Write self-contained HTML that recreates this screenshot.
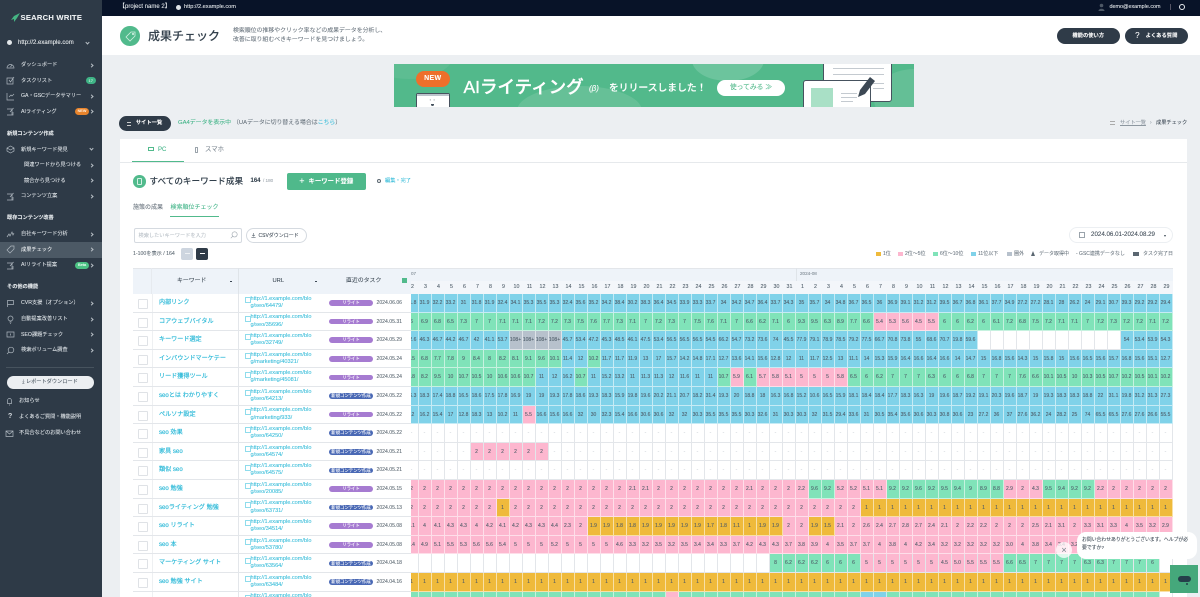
<!DOCTYPE html>
<html lang="ja"><head><meta charset="utf-8"><title>成果チェック</title>
<style>
*{box-sizing:border-box}
html,body{margin:0;padding:0}
body{width:1200px;height:597px;overflow:hidden;position:relative;background:#eceff2;font-family:"Liberation Sans","Noto Sans CJK JP",sans-serif;color:#2f3b48;filter:blur(.25px);-webkit-text-stroke:.07px}
.a{position:absolute;white-space:nowrap}
.t{position:absolute;white-space:nowrap;line-height:10px;margin-top:-5px}
#side{position:absolute;left:0;top:0;width:102px;height:597px;background:#2e3a47;color:#dfe4e8;overflow:hidden}
#side .t{font-size:5.2px;letter-spacing:0}
#side .h{font-weight:700;color:#e8ecef;left:7px}
#side .m{left:21px}
#side .c{left:24px}
#side svg.i{position:absolute;left:6px;width:9px;height:9px;fill:none;stroke:#aeb7bf;stroke-width:.7}
#side .v{position:absolute;left:90px;width:3px;height:3px;border-top:.7px solid #b5bdc4;border-right:.7px solid #b5bdc4;transform:rotate(45deg);margin-top:-1.5px}
.pill{position:absolute;border-radius:9px;background:#2f3b48;color:#fff;font-weight:700;text-align:center;white-space:nowrap}
#grid{position:absolute;left:411px;top:294px;width:762px;height:303px;overflow:hidden}
#in{margin-left:-5.5px;width:780px}
.r{display:flex;height:18.6px}
.r i{flex:0 0 13px;height:18.6px;text-align:center;font:normal 5px/18px "Liberation Sans",sans-serif;color:#4c5a66;border-right:.6px solid rgba(255,255,255,.55);border-bottom:.6px solid rgba(255,255,255,.55);overflow:hidden}
.b i{background:#80d2e9}.g i{background:#80e3b9}.p i{background:#fdb7cf}.y i{background:#efba3b}
.w i{background:#fff;border-right:.6px solid #e3e6ea;border-bottom:.6px solid #e3e6ea;color:#c5cbd1}
i.b{background:#80d2e9!important}i.g{background:#80e3b9!important}i.p{background:#fdb7cf!important}i.y{background:#efba3b!important}i.n{background:#b7c1cc!important}
i.w{background:#fff!important;border-right:.6px solid #e3e6ea!important;border-bottom:.6px solid #e3e6ea!important}
i.g,i.p{color:#4c5a66!important}
#left{position:absolute;left:133px;top:294px;width:278px;height:303px;overflow:hidden;background:#fff}
.k{position:relative;height:18.6px;border-bottom:.6px solid #e3e6ea;background:#fff}
.k:before{content:"";position:absolute;left:5px;top:5px;width:8px;height:8px;border:.6px solid #dfe2e6;border-radius:1px}
.k:after{content:"";position:absolute;left:18.500px;top:0;bottom:0;width:.6px;background:#eef0f2}
.k u{position:absolute;left:104.7px;top:0;bottom:0;width:.6px;background:#e3e6ea}
.k b{position:absolute;left:26px;top:0;line-height:18px;font-size:6.1px;font-weight:400;-webkit-text-stroke:.18px #2fbad8;color:#2fbad8;white-space:nowrap}
.k a{position:absolute;left:117.500px;top:1.800px;font-size:5.600px;line-height:7.300px;color:#35bcd9;width:76px;white-space:pre}
.k a:before{content:"";position:absolute;left:-6px;top:1.500px;width:4px;height:4px;border:.5px solid #8fdcec}
.k s{position:absolute;left:196px;top:6.300px;width:44px;height:5.600px;border-radius:3px;font-size:4.400px;line-height:5.600px;text-align:center;color:#fff;text-decoration:none;background:#a67bd1;white-space:nowrap;overflow:hidden}
.k s.n{background:#4a69b5}
.k em{position:absolute;left:243.500px;top:0;font-style:normal;font-size:5.100px;line-height:18px;color:#5b6771}
.d{position:absolute;top:281px;height:13px;width:13px;text-align:center;font-size:5.300px;line-height:13px;color:#4c5a66}
.lg{position:absolute;top:251.500px;width:4.500px;height:4.500px}
.lt{position:absolute;top:249px;font-size:5px;line-height:10px;color:#6a757f;white-space:nowrap}
</style></head><body>

<div class="a" style="left:102px;top:0;width:1098px;height:16px;background:#081328"></div>
<div class="t" style="left:119px;top:7px;font-size:6px;color:#e8ecef">【project name 2】</div>
<div class="a" style="left:175.500px;top:4.500px;width:5px;height:5px;border-radius:50%;background:#dfe4e8"></div>
<div class="t" style="left:184px;top:7px;font-size:5.600px;color:#e8ecef">http://2.example.com</div>
<svg class="a" style="left:1098px;top:3px" width="7" height="8" viewBox="0 0 7 8"><circle cx="3.500" cy="2.500" r="1.800" fill="#4d5866"/><path d="M.5 8c0-3 6-3 6 0z" fill="#4d5866"/></svg>
<div class="t" style="left:1109.500px;top:7px;font-size:5.400px;color:#e8ecef">demo@example.com</div>
<div class="a" style="left:1170px;top:4px;width:.6px;height:6px;background:#556"></div>
<div class="a" style="left:1179px;top:4px;width:6px;height:6px;border-radius:50%;border:1.800px solid #e8ecef"></div>

<div class="a" style="left:102px;top:16px;width:1098px;height:39px;background:#fff"></div>
<div class="a" style="left:120px;top:26px;width:19.500px;height:19.500px;border-radius:50%;background:#51ba8c"></div>
<svg class="a" style="left:124.500px;top:30.500px" width="11" height="11" viewBox="0 0 11 11" fill="none" stroke="#cfeee0" stroke-width=".8"><path d="M1 6 6 1h4v4L5 10z"/><circle cx="8" cy="3" r=".7"/></svg>
<div class="t" style="left:148px;top:36px;font-size:12px;font-weight:500;color:#33404c;line-height:14px;margin-top:-7px">成果チェック</div>
<div class="t" style="left:233px;top:31px;font-size:5.900px;color:#66717b">検索順位の推移やクリック率などの成果データを分析し、</div>
<div class="t" style="left:233px;top:40px;font-size:5.900px;color:#66717b">改善に取り組むべきキーワードを見つけましょう。</div>
<div class="pill" style="left:1057px;top:28px;width:62.500px;height:16px;font-size:5.300px;line-height:16px">機能の使い方</div>
<div class="pill" style="left:1125px;top:28px;width:62.500px;height:16px;font-size:5.300px;line-height:16px"><span style="font-size:8px;font-weight:400;margin-right:6px;vertical-align:-1px">?</span>よくある質問</div>

<!-- banner -->
<div class="a" style="left:393.500px;top:64px;width:520px;height:43px;background:#52b98b;overflow:hidden">
<div class="a" style="left:298px;top:-25px;width:72px;height:42px;border-radius:50%;background:#6cc49d"></div>
<div class="a" style="left:123px;top:22px;width:125px;height:50px;border-radius:50%;background:#66c097"></div>
<div class="a" style="left:-30px;top:-35px;width:90px;height:50px;border-radius:50%;background:#5dbd92"></div>
<div class="a" style="left:480px;top:5px;width:80px;height:60px;border-radius:50%;background:#64bf96"></div>
<div class="a" style="left:22px;top:28.500px;width:34px;height:20px;background:#fff;border:.8px solid #46525e;border-radius:2px 2px 0 0"></div>
<div class="a" style="left:23px;top:29.500px;width:32px;height:2.500px;background:#bcc4cc"></div>
<div class="t" style="left:35.500px;top:37px;font-size:5px;color:#46525e">･ ･</div>
<div class="a" style="left:37px;top:39.500px;width:3px;height:2.500px;border:.6px solid #46525e;border-radius:0 0 2px 2px"></div>
<div class="a" style="left:22px;top:7px;width:34.500px;height:16px;border-radius:8px;background:#ee6f2b;color:#fff;font-size:7px;font-weight:700;text-align:center;line-height:15.500px;letter-spacing:.3px">NEW</div>
<div class="t" style="left:70px;top:23px;font-size:17.500px;font-weight:500;color:#fff;line-height:20px;margin-top:-10px;-webkit-text-stroke:.35px #fff">AIライティング</div>
<div class="t" style="left:195.500px;top:25px;font-size:8px;font-style:italic;color:#fff">(β)</div>
<div class="t" style="left:215.500px;top:25px;font-size:9.800px;font-weight:500;color:#fff;line-height:12px;margin-top:-6px;-webkit-text-stroke:.15px #fff">をリリースしました！</div>
<div class="a" style="left:323.500px;top:16px;width:68px;height:16.400px;border-radius:8.200px;background:#fff;color:#52b98b;font-size:6.800px;text-align:center;line-height:16.400px">使ってみる ≫</div>
<div class="a" style="left:429.500px;top:-4px;width:68.600px;height:41.700px;background:#fff;border:.8px solid #46525e;border-radius:0 0 3px 3px"></div>
<div class="a" style="left:439px;top:4px;width:51px;height:.8px;background:#c4cad0"></div>
<div class="a" style="left:439px;top:10px;width:51px;height:.8px;background:#c4cad0"></div>
<div class="a" style="left:479px;top:19px;width:11px;height:.8px;background:#c4cad0"></div>
<div class="a" style="left:479px;top:24px;width:11px;height:.8px;background:#c4cad0"></div>
<div class="a" style="left:409.500px;top:15.500px;width:67.500px;height:34px;background:#fff;border:.8px solid #46525e;border-radius:3px"></div>
<div class="a" style="left:417px;top:24px;width:22.500px;height:20px;background:#a9e0c6"></div>
<div class="a" style="left:447px;top:29px;width:16px;height:.8px;background:#c4cad0"></div>
<div class="a" style="left:447px;top:33px;width:16px;height:.8px;background:#c4cad0"></div>
<div class="a" style="left:447px;top:37px;width:12px;height:.8px;background:#c4cad0"></div>
<svg class="a" style="left:463.500px;top:12px" width="20" height="22" viewBox="0 0 20 22"><path d="M1 21 3 14 13 1l5 4L8 18z" fill="#3c4854"/></svg>
</div>

<div class="pill" style="left:119px;top:116px;width:52px;height:15px;font-size:5.300px;line-height:15px;padding-left:8px">サイト一覧</div>
<div class="a" style="left:127px;top:121.500px;width:4px;height:4px;border-top:.6px solid #ccc;border-bottom:.6px solid #ccc"></div>
<div class="t" style="left:178px;top:123px;font-size:5.900px;color:#3fb386">GA4データを表示中</div>
<div class="t" style="left:233px;top:123px;font-size:5.900px;color:#66717b">（UAデータに切り替える場合は<span style="color:#35bcd9">こちら</span>）</div>
<div class="t" style="left:1120px;top:123px;font-size:5.200px;color:#8d97a0;text-decoration:underline">サイト一覧</div>
<div class="t" style="left:1150px;top:123px;font-size:5px;color:#8d97a0">›</div>
<div class="t" style="left:1156px;top:123px;font-size:5.200px;color:#3c4854">成果チェック</div>
<div class="a" style="left:1110px;top:121px;width:5px;height:4px;border-top:.5px solid #aaa;border-bottom:.5px solid #aaa"></div>

<!-- card -->
<div class="a" style="left:120px;top:139px;width:1067px;height:458px;background:#fff"></div>
<div class="a" style="left:120px;top:161.500px;width:1067px;height:.8px;background:#e6e9ec"></div>
<div class="a" style="left:132px;top:161px;width:52px;height:1.200px;background:#51ba8c"></div>
<div class="a" style="left:147.500px;top:147px;width:6px;height:4px;border:.6px solid #51ba8c"></div>
<div class="t" style="left:158px;top:150px;font-size:6px;color:#3fb386;font-weight:500">PC</div>
<div class="a" style="left:195px;top:147px;width:2.500px;height:5.500px;border:.5px solid #9aa3ab;border-radius:.5px"></div>
<div class="t" style="left:205px;top:150px;font-size:6.400px;color:#7c8791">スマホ</div>

<div class="a" style="left:133px;top:175px;width:12.500px;height:12.500px;border-radius:50%;background:#51ba8c"></div>
<div class="a" style="left:136.500px;top:178px;width:5.500px;height:6.500px;border:.6px solid #d4f0e3;border-radius:1px"></div>
<div class="t" style="left:149.500px;top:181px;font-size:8.600px;font-weight:500;color:#33404c">すべてのキーワード成果</div>
<div class="t" style="left:250.500px;top:181px;font-size:6px;font-weight:700;color:#33404c">164</div>
<div class="t" style="left:263px;top:181px;font-size:4.600px;color:#9aa3ab">/ 180</div>
<div class="a" style="left:286.500px;top:173px;width:79.500px;height:17px;background:#4fb98b;border-radius:2px;color:#fff;font-size:6.400px;font-weight:700;text-align:center;line-height:17px"><span style="font-size:9px;font-weight:400;margin-right:4px;vertical-align:-1px">+</span>キーワード登録</div>
<div class="a" style="left:377px;top:179px;width:4px;height:4px;border-radius:50%;border:1px solid #5b6771"></div>
<div class="t" style="left:385px;top:181px;font-size:5.200px;color:#35bcd9">編集・完了</div>

<div class="t" style="left:133px;top:208px;font-size:6px;color:#66717b">施策の成果</div>
<div class="t" style="left:170.500px;top:208px;font-size:6px;color:#3fb386">検索順位チェック</div>
<div class="a" style="left:170px;top:216px;width:49px;height:.8px;background:#51ba8c"></div>

<div class="a" style="left:133.500px;top:228px;width:108px;height:14.500px;border:.7px solid #d5dae0;border-radius:2px"></div>
<div class="t" style="left:138.500px;top:235.500px;font-size:5.200px;color:#b9c0c7">検索したいキーワードを入力</div>
<svg class="a" style="left:230px;top:231px" width="8" height="8" viewBox="0 0 8 8" fill="none" stroke="#9aa3ab" stroke-width=".6"><circle cx="4.600" cy="3.400" r="2.600"/><path d="M2.700 5.300.8 7.200"/></svg>
<div class="a" style="left:245.500px;top:228px;width:61.500px;height:14.500px;border:.7px solid #d5dae0;border-radius:8px"></div>
<svg class="a" style="left:251px;top:232.500px" width="5" height="5" viewBox="0 0 5 5" fill="none" stroke="#5b6771" stroke-width=".6"><path d="M2.500 0v3M1.200 1.900 2.500 3.200 3.800 1.900M.4 4.600h4.200"/></svg>
<div class="t" style="left:258.500px;top:235.500px;font-size:5px;color:#3c4854">CSVダウンロード</div>
<div class="t" style="left:133px;top:254px;font-size:5.200px;color:#5b6771">1-100を表示 / 164</div>
<div class="a" style="left:181px;top:248px;width:11.500px;height:11.500px;border-radius:2px;background:#cdd5df"></div>
<div class="a" style="left:196px;top:248px;width:12px;height:11.500px;border-radius:2px;background:#2f3b48"></div>
<div class="a" style="left:199.500px;top:253px;width:5px;height:1.400px;background:#fff"></div>
<div class="a" style="left:184.500px;top:253px;width:5px;height:1.400px;background:#eef1f4"></div>

<div class="a" style="left:1069px;top:226.500px;width:104px;height:16.500px;border:.7px solid #eceff2;border-radius:9px"></div>
<div class="a" style="left:1079px;top:232px;width:6px;height:6px;border:.6px solid #9aa3ab"></div>
<div class="t" style="left:1091px;top:235px;font-size:6.200px;color:#3c4854">2024.06.01-2024.08.29</div>
<div class="a" style="left:1163.500px;top:234.500px;width:0;height:0;border:1.500px solid transparent;border-top:2px solid #3c4854"></div>

<div class="lg" style="left:876px;background:#efba3b"></div><div class="lt" style="left:883px">1位</div>
<div class="lg" style="left:898px;background:#fdb7cf"></div><div class="lt" style="left:905px">2位〜5位</div>
<div class="lg" style="left:933px;background:#80e3b9"></div><div class="lt" style="left:940px">6位〜10位</div>
<div class="lg" style="left:971px;background:#80d2e9"></div><div class="lt" style="left:978px">11位以下</div>
<div class="lg" style="left:1007px;background:#b7c1cc"></div><div class="lt" style="left:1014px">圏外</div>
<div class="a" style="left:1031px;top:251px;width:0;height:0;border:2.500px solid transparent;border-bottom:5px solid #5b6771;border-top:0"></div><div class="lt" style="left:1039px">データ取得中</div>
<div class="lt" style="left:1076px">- GSC連携データなし</div>
<div class="lg" style="left:1133px;background:#5b6771;width:5.500px"></div><div class="lt" style="left:1143px">タスク完了日</div>

<!-- table head -->
<div class="a" style="left:133px;top:268px;width:1040px;height:26px;background:#eef3f9;border-top:.7px solid #e3e6ea"></div>
<div class="a" style="left:151px;top:268px;width:.6px;height:26px;background:#e6eaef"></div>
<div class="a" style="left:237.500px;top:268px;width:.6px;height:26px;background:#dfe4e9"></div>
<div class="a" style="left:411px;top:281px;width:762px;height:13px;background:#f3f6fa"></div>
<div class="a" style="left:795.500px;top:268px;width:.6px;height:13px;background:#dfe4e9"></div>
<div class="t" style="left:177px;top:281px;font-size:5.900px;color:#3c4854">キーワード</div>
<div class="a" style="left:230px;top:280.500px;width:2.400px;height:.9px;background:#3c4854"></div>
<div class="t" style="left:272.500px;top:281px;font-size:5.800px;color:#3c4854">URL</div>
<div class="a" style="left:315px;top:280.500px;width:2.400px;height:.9px;background:#3c4854"></div>
<div class="t" style="left:346px;top:281px;font-size:5.900px;color:#3c4854">直近のタスク</div>
<div class="a" style="left:401.500px;top:277.500px;width:5px;height:5px;background:#51ba8c"></div>
<div class="t" style="left:411px;top:274px;font-size:4.600px;color:#7c8791">07</div>
<div class="t" style="left:800px;top:274px;font-size:4.600px;color:#7c8791">2024-08</div>

<div class="d" style="left:406px">2</div><div class="d" style="left:419px">3</div><div class="d" style="left:432px">4</div><div class="d" style="left:445px">5</div><div class="d" style="left:458px">6</div><div class="d" style="left:471px">7</div><div class="d" style="left:484px">8</div><div class="d" style="left:497px">9</div><div class="d" style="left:510px">10</div><div class="d" style="left:523px">11</div><div class="d" style="left:536px">12</div><div class="d" style="left:549px">13</div><div class="d" style="left:562px">14</div><div class="d" style="left:575px">15</div><div class="d" style="left:588px">16</div><div class="d" style="left:601px">17</div><div class="d" style="left:614px">18</div><div class="d" style="left:627px">19</div><div class="d" style="left:640px">20</div><div class="d" style="left:653px">21</div><div class="d" style="left:666px">22</div><div class="d" style="left:679px">23</div><div class="d" style="left:692px">24</div><div class="d" style="left:705px">25</div><div class="d" style="left:718px">26</div><div class="d" style="left:731px">27</div><div class="d" style="left:744px">28</div><div class="d" style="left:757px">29</div><div class="d" style="left:770px">30</div><div class="d" style="left:783px">31</div><div class="d" style="left:796px">1</div><div class="d" style="left:809px">2</div><div class="d" style="left:822px">3</div><div class="d" style="left:835px">4</div><div class="d" style="left:848px">5</div><div class="d" style="left:861px">6</div><div class="d" style="left:874px">7</div><div class="d" style="left:887px">8</div><div class="d" style="left:900px">9</div><div class="d" style="left:913px">10</div><div class="d" style="left:926px">11</div><div class="d" style="left:939px">12</div><div class="d" style="left:952px">13</div><div class="d" style="left:965px">14</div><div class="d" style="left:978px">15</div><div class="d" style="left:991px">16</div><div class="d" style="left:1004px">17</div><div class="d" style="left:1017px">18</div><div class="d" style="left:1030px">19</div><div class="d" style="left:1043px">20</div><div class="d" style="left:1056px">21</div><div class="d" style="left:1069px">22</div><div class="d" style="left:1082px">23</div><div class="d" style="left:1095px">24</div><div class="d" style="left:1108px">25</div><div class="d" style="left:1121px">26</div><div class="d" style="left:1134px">27</div><div class="d" style="left:1147px">28</div><div class="d" style="left:1160px">29</div>

<!-- left table -->
<div id="left">
<div class="k"><u></u><b>内部リンク</b><a>http://1.example.com/blo
g/seo/64479/</a><s>リライト</s><em>2024.06.06</em></div>
<div class="k"><u></u><b>コアウェブバイタル</b><a>http://1.example.com/blo
g/seo/35696/</a><s>リライト</s><em>2024.05.31</em></div>
<div class="k"><u></u><b>キーワード選定</b><a>http://1.example.com/blo
g/seo/32749/</a><s>リライト</s><em>2024.05.29</em></div>
<div class="k"><u></u><b>インバウンドマーケテー</b><a>http://1.example.com/blo
g/marketing/40321/</a><s>リライト</s><em>2024.05.24</em></div>
<div class="k"><u></u><b>リード獲得ツール</b><a>http://1.example.com/blo
g/marketing/45081/</a><s>リライト</s><em>2024.05.24</em></div>
<div class="k"><u></u><b>seoとは わかりやすく</b><a>http://1.example.com/blo
g/seo/64213/</a><s class="n">新規コンテンツ作成</s><em>2024.05.22</em></div>
<div class="k"><u></u><b>ペルソナ設定</b><a>http://1.example.com/blo
g/marketing/933/</a><s>リライト</s><em>2024.05.22</em></div>
<div class="k"><u></u><b>seo 効果</b><a>http://1.example.com/blo
g/seo/64250/</a><s class="n">新規コンテンツ作成</s><em>2024.05.22</em></div>
<div class="k"><u></u><b>家具 seo</b><a>http://1.example.com/blo
g/seo/64574/</a><s class="n">新規コンテンツ作成</s><em>2024.05.21</em></div>
<div class="k"><u></u><b>類似 seo</b><a>http://1.example.com/blo
g/seo/64575/</a><s class="n">新規コンテンツ作成</s><em>2024.05.21</em></div>
<div class="k"><u></u><b>seo 勉強</b><a>http://1.example.com/blo
g/seo/20085/</a><s>リライト</s><em>2024.05.15</em></div>
<div class="k"><u></u><b>seoライティング 勉強</b><a>http://1.example.com/blo
g/seo/63731/</a><s class="n">新規コンテンツ作成</s><em>2024.05.13</em></div>
<div class="k"><u></u><b>seo リライト</b><a>http://1.example.com/blo
g/seo/34514/</a><s>リライト</s><em>2024.05.08</em></div>
<div class="k"><u></u><b>seo 本</b><a>http://1.example.com/blo
g/seo/53780/</a><s>リライト</s><em>2024.05.08</em></div>
<div class="k"><u></u><b>マーケティング サイト</b><a>http://1.example.com/blo
g/seo/63564/</a><s class="n">新規コンテンツ作成</s><em>2024.04.18</em></div>
<div class="k"><u></u><b>seo 勉強 サイト</b><a>http://1.example.com/blo
g/seo/63484/</a><s class="n">新規コンテンツ作成</s><em>2024.04.16</em></div>
<div class="k"><u></u><a>http://1.example.com/blo</a></div>
</div>

<!-- grid -->
<div id="grid"><div id="in">
<div class="r b"><i>31.8</i><i>31.9</i><i>32.2</i><i>33.2</i><i>31</i><i>31.8</i><i>31.9</i><i>32.4</i><i>34.1</i><i>35.3</i><i>35.5</i><i>35.3</i><i>32.4</i><i>35.6</i><i>35.2</i><i>34.2</i><i>38.4</i><i>30.2</i><i>38.3</i><i>36.4</i><i>34.5</i><i>33.9</i><i>33.3</i><i>33.7</i><i>34</i><i>34.2</i><i>34.7</i><i>36.4</i><i>33.7</i><i>34.3</i><i>35</i><i>35.7</i><i>34</i><i>34.8</i><i>36.7</i><i>36.5</i><i>36</i><i>36.9</i><i>39.1</i><i>31.2</i><i>31.2</i><i>39.5</i><i>36.7</i><i>36.8</i><i>36.1</i><i>37.7</i><i>34.9</i><i>27.2</i><i>27.2</i><i>28.1</i><i>28</i><i>26.2</i><i>24</i><i>29.1</i><i>30.7</i><i>39.3</i><i>29.2</i><i>29.2</i><i>29.4</i></div>
<div class="r g"><i>6</i><i>6.9</i><i>6.8</i><i>6.5</i><i>7.3</i><i>7</i><i>7</i><i>7.1</i><i>7.1</i><i>7.1</i><i>7.2</i><i>7.2</i><i>7.3</i><i>7.5</i><i>7.6</i><i>7.7</i><i>7.3</i><i>7.1</i><i>7</i><i>7.2</i><i>7.3</i><i>7</i><i>7.5</i><i>7.6</i><i>7.1</i><i>7</i><i>6.6</i><i>6.2</i><i>7.1</i><i>6</i><i>9.3</i><i>9.5</i><i>6.3</i><i>8.9</i><i>7.7</i><i>6.6</i><i class="p">5.4</i><i class="p">5.3</i><i class="p">5.6</i><i class="p">4.5</i><i class="p">5.5</i><i>6</i><i>6</i><i>6.2</i><i>6</i><i>6.1</i><i>7.2</i><i>6.8</i><i>7.5</i><i>7.2</i><i>7.1</i><i>7.1</i><i>7</i><i>7.2</i><i>7.3</i><i>7.2</i><i>7.2</i><i>7.1</i><i>7.2</i></div>
<div class="r b"><i>42.6</i><i>46.3</i><i>46.7</i><i>44.2</i><i>46.7</i><i>42</i><i>41.1</i><i>53.7</i><i class="n">108+</i><i class="n">108+</i><i class="n">108+</i><i class="n">108+</i><i>45.7</i><i>53.4</i><i>47.2</i><i>45.3</i><i>48.5</i><i>46.1</i><i>47.5</i><i>53.4</i><i>56.5</i><i>56.5</i><i>56.5</i><i>54.5</i><i>66.2</i><i>54.7</i><i>73.2</i><i>73.6</i><i>74</i><i>45.5</i><i>77.9</i><i>79.1</i><i>78.9</i><i>78.5</i><i>79.2</i><i>77.5</i><i>66.7</i><i>70.8</i><i>73.8</i><i>55</i><i>68.6</i><i>70.7</i><i>19.8</i><i>59.6</i><i class="w"></i><i class="w"></i><i class="w"></i><i class="w"></i><i class="w"></i><i class="w"></i><i class="w"></i><i class="w"></i><i class="w"></i><i class="w"></i><i class="w"></i><i>54</i><i>53.4</i><i>53.9</i><i>54.3</i></div>
<div class="r g"><i>7.5</i><i>6.8</i><i>7.7</i><i>7.8</i><i>9</i><i>8.4</i><i>8</i><i>8.2</i><i>8.1</i><i>9.1</i><i>9.6</i><i>10.1</i><i class="b">11.4</i><i class="b">12</i><i>10.2</i><i class="b">11.7</i><i class="b">11.7</i><i class="b">11.9</i><i class="b">13</i><i class="b">17</i><i class="b">15.7</i><i class="b">14.2</i><i class="b">14.8</i><i class="b">17.1</i><i class="b">12.7</i><i class="b">13.6</i><i class="b">14.1</i><i class="b">15.6</i><i class="b">12.8</i><i class="b">12</i><i class="b">11</i><i class="b">11.7</i><i class="b">12.5</i><i class="b">13</i><i class="b">11.1</i><i class="b">14</i><i class="b">15.3</i><i class="b">15.9</i><i class="b">16.4</i><i class="b">16.6</i><i class="b">16.4</i><i class="b">16.6</i><i class="b">14</i><i class="b">14.7</i><i class="b">15</i><i class="b">16.8</i><i class="b">15.6</i><i class="b">14.3</i><i class="b">15</i><i class="b">15.8</i><i class="b">15</i><i class="b">15.6</i><i class="b">16.5</i><i class="b">15.6</i><i class="b">15.7</i><i class="b">16.8</i><i class="b">15.6</i><i class="b">15.1</i><i class="b">12.7</i></div>
<div class="r g"><i>9.8</i><i>8.2</i><i>9.5</i><i>10</i><i>10.7</i><i>10.5</i><i>10</i><i>10.6</i><i>10.6</i><i>10.7</i><i class="b">11</i><i class="b">12</i><i class="b">16.2</i><i>10.7</i><i class="b">11</i><i class="b">15.2</i><i class="b">13.2</i><i class="b">11</i><i class="b">11.3</i><i class="b">11.3</i><i class="b">12</i><i class="b">11.6</i><i class="b">11</i><i class="b">11</i><i>10.7</i><i class="p">5.9</i><i>6.1</i><i class="p">5.7</i><i class="p">5.8</i><i class="p">5.1</i><i class="p">5</i><i class="p">5</i><i class="p">5</i><i class="p">5.8</i><i>6.5</i><i>6</i><i>6.2</i><i>7</i><i>7</i><i>7</i><i>6.3</i><i>6</i><i>6</i><i>6.8</i><i>7</i><i>7</i><i>7</i><i>7.6</i><i>6.6</i><i>10.1</i><i>10.5</i><i>10</i><i>10.3</i><i>10.5</i><i>10.7</i><i>10.2</i><i>10.5</i><i>10.1</i><i>10.2</i></div>
<div class="r b"><i>16.3</i><i>18.3</i><i>17.4</i><i>18.8</i><i>16.5</i><i>18.6</i><i>17.5</i><i>17.8</i><i>16.9</i><i>19</i><i>19</i><i>19.3</i><i>17.8</i><i>18.6</i><i>19.3</i><i>18.3</i><i>15.9</i><i>19.8</i><i>19.6</i><i>20.2</i><i>21.1</i><i>20.7</i><i>18.2</i><i>31.4</i><i>19.3</i><i>20</i><i>18.8</i><i>18</i><i>16.3</i><i>16.8</i><i>15.2</i><i>10.6</i><i>16.5</i><i>15.9</i><i>18.1</i><i>18.4</i><i>18.4</i><i>17.7</i><i>18.3</i><i>16.3</i><i>19</i><i>19.6</i><i>18.7</i><i>19.2</i><i>19.1</i><i>20.3</i><i>19.6</i><i>18.7</i><i>19</i><i>19.3</i><i>18.3</i><i>18.3</i><i>18.8</i><i>22</i><i>31.1</i><i>19.8</i><i>31.2</i><i>31.3</i><i>27.3</i></div>
<div class="r b"><i>12</i><i>16.2</i><i>15.4</i><i>17</i><i>12.8</i><i>18.3</i><i>13</i><i>10.2</i><i>11</i><i class="p">5.5</i><i>16.6</i><i>15.6</i><i>16.6</i><i>32</i><i>30</i><i>32.3</i><i>15.4</i><i>16.6</i><i>30.6</i><i>30.6</i><i>32</i><i>32</i><i>30.3</i><i>35.5</i><i>35.5</i><i>35.5</i><i>30.3</i><i>32.6</i><i>31</i><i>30.3</i><i>30.3</i><i>32</i><i>31.5</i><i>29.4</i><i>33.6</i><i>31</i><i>30.5</i><i>35.4</i><i>35.6</i><i>30.6</i><i>30.3</i><i>30.8</i><i>30.6</i><i>23</i><i>27.2</i><i>36</i><i>37</i><i>27.6</i><i>36.2</i><i>24</i><i>28.2</i><i>25</i><i>74</i><i>65.5</i><i>65.5</i><i>27.6</i><i>27.6</i><i>26.6</i><i>55.5</i></div>
<div class="r w"><i>-</i><i>-</i><i>-</i><i>-</i><i>-</i><i>-</i><i>-</i><i>-</i><i>-</i><i>-</i><i>-</i><i>-</i><i>-</i><i>-</i><i>-</i><i>-</i><i>-</i><i>-</i><i>-</i><i>-</i><i>-</i><i>-</i><i>-</i><i>-</i><i>-</i><i>-</i><i>-</i><i>-</i><i>-</i><i>-</i><i>-</i><i>-</i><i>-</i><i>-</i><i>-</i><i>-</i><i>-</i><i>-</i><i>-</i><i>-</i><i>-</i><i>-</i><i>-</i><i>-</i><i>-</i><i>-</i><i>-</i><i>-</i><i>-</i><i>-</i><i>-</i><i>-</i><i>-</i><i>-</i><i>-</i><i>-</i><i>-</i><i>-</i><i>-</i></div>
<div class="r w"><i>-</i><i>-</i><i>-</i><i>-</i><i>-</i><i class="p">2</i><i class="p">2</i><i class="p">2</i><i class="p">2</i><i class="p">2</i><i class="p">2</i><i>-</i><i>-</i><i>-</i><i>-</i><i>-</i><i>-</i><i>-</i><i>-</i><i>-</i><i>-</i><i>-</i><i>-</i><i>-</i><i>-</i><i>-</i><i>-</i><i>-</i><i>-</i><i>-</i><i>-</i><i>-</i><i>-</i><i>-</i><i>-</i><i>-</i><i>-</i><i>-</i><i>-</i><i>-</i><i>-</i><i>-</i><i>-</i><i>-</i><i>-</i><i>-</i><i>-</i><i>-</i><i>-</i><i>-</i><i>-</i><i>-</i><i>-</i><i>-</i><i>-</i><i>-</i><i>-</i><i>-</i><i>-</i></div>
<div class="r w"><i>-</i><i>-</i><i>-</i><i>-</i><i>-</i><i>-</i><i>-</i><i>-</i><i>-</i><i>-</i><i>-</i><i>-</i><i>-</i><i>-</i><i>-</i><i>-</i><i>-</i><i>-</i><i>-</i><i>-</i><i>-</i><i>-</i><i>-</i><i>-</i><i>-</i><i>-</i><i>-</i><i>-</i><i>-</i><i>-</i><i>-</i><i>-</i><i>-</i><i>-</i><i>-</i><i>-</i><i>-</i><i>-</i><i>-</i><i>-</i><i>-</i><i>-</i><i>-</i><i>-</i><i>-</i><i>-</i><i>-</i><i>-</i><i>-</i><i>-</i><i>-</i><i>-</i><i>-</i><i>-</i><i>-</i><i>-</i><i>-</i><i>-</i><i>-</i></div>
<div class="r p"><i>2</i><i>2</i><i>2</i><i>2</i><i>2</i><i>2</i><i>2</i><i>2</i><i>2</i><i>2</i><i>2</i><i>2</i><i>2</i><i>2</i><i>2</i><i>2</i><i>2</i><i>2.1</i><i>2.1</i><i>2</i><i>2</i><i>2</i><i>2</i><i>2</i><i>2</i><i>2</i><i>2.1</i><i>2</i><i>2</i><i>2</i><i>2.2</i><i class="g">9.6</i><i class="g">9.2</i><i>5.2</i><i>5.2</i><i>5.1</i><i>5.1</i><i class="g">9.2</i><i class="g">9.2</i><i class="g">9.6</i><i class="g">9.2</i><i class="g">9.5</i><i class="g">9.4</i><i class="g">9</i><i class="g">8.9</i><i class="g">8.8</i><i>2.9</i><i>2</i><i>4.3</i><i class="g">9.5</i><i class="g">9.4</i><i class="g">9.2</i><i class="g">9.2</i><i>2.2</i><i>2</i><i>2</i><i>2</i><i>2</i><i>2</i></div>
<div class="r p"><i>2</i><i>2</i><i>2</i><i>2</i><i>2</i><i>2</i><i>2</i><i class="y">1</i><i>2</i><i>2</i><i>2</i><i>2</i><i>2</i><i>2</i><i>2</i><i>2</i><i>2</i><i>2</i><i>2</i><i>2</i><i>2</i><i>2</i><i>2</i><i>2</i><i>2</i><i>2</i><i>2</i><i>2</i><i>2</i><i>2</i><i>2</i><i>2</i><i>2</i><i>2</i><i>2</i><i class="y">1</i><i class="y">1</i><i class="y">1</i><i class="y">1</i><i class="y">1</i><i class="y">1</i><i class="y">1</i><i class="y">1</i><i class="y">1</i><i class="y">1</i><i class="y">1</i><i class="y">1</i><i class="y">1</i><i class="y">1</i><i class="y">1</i><i class="y">1</i><i class="y">1</i><i class="y">1</i><i class="y">1</i><i class="y">1</i><i class="y">1</i><i class="y">1</i><i class="y">1</i><i class="y">1</i></div>
<div class="r p"><i>4.1</i><i>4</i><i>4.1</i><i>4.3</i><i>4.3</i><i>4</i><i>4.2</i><i>4.1</i><i>4.2</i><i>4.3</i><i>4.3</i><i>4.4</i><i>2.3</i><i>2</i><i class="y">1.9</i><i class="y">1.9</i><i class="y">1.8</i><i class="y">1.8</i><i class="y">1.9</i><i class="y">1.9</i><i class="y">1.9</i><i class="y">1.9</i><i class="y">1.9</i><i class="y">1.7</i><i class="y">1.8</i><i class="y">1.1</i><i class="y">1</i><i class="y">1.9</i><i class="y">1.9</i><i>2</i><i>2</i><i class="y">1.9</i><i class="y">1.5</i><i>2.1</i><i>2</i><i>2.6</i><i>2.4</i><i>2.7</i><i>2.8</i><i>2.7</i><i>2.4</i><i>2.1</i><i>2</i><i>2.2</i><i>2.2</i><i>2</i><i>2</i><i>2</i><i>2.5</i><i>2.1</i><i>3.1</i><i>2</i><i>3.3</i><i>3.1</i><i>3.3</i><i>4</i><i>3.5</i><i>3.2</i><i>2.9</i></div>
<div class="r p"><i>4.4</i><i>4.9</i><i>5.1</i><i>5.5</i><i>5.3</i><i>5.6</i><i>5.6</i><i>5.4</i><i>5</i><i>5</i><i>5</i><i>5.2</i><i>5</i><i>5</i><i>5</i><i>5</i><i>4.6</i><i>3.3</i><i>3.2</i><i>3.5</i><i>3.2</i><i>3.5</i><i>3.4</i><i>3.4</i><i>3.3</i><i>3.7</i><i>4.2</i><i>4.3</i><i>4.3</i><i>3.7</i><i>3.8</i><i>3.9</i><i>4</i><i>3.5</i><i>3.7</i><i>3.7</i><i>4</i><i>3.8</i><i>4</i><i>4.2</i><i>3.4</i><i>3.2</i><i>3.2</i><i>3.2</i><i>3.2</i><i>3.2</i><i>3.0</i><i>4</i><i>3.8</i><i>3.4</i><i>3.4</i><i>3.2</i><i>3.3</i><i>3.1</i><i>3.2</i><i>3</i><i>3</i><i>3</i><i>3</i></div>
<div class="r w"><i></i><i></i><i></i><i></i><i></i><i></i><i></i><i></i><i></i><i></i><i></i><i></i><i></i><i></i><i></i><i></i><i></i><i></i><i></i><i></i><i></i><i></i><i></i><i></i><i></i><i></i><i></i><i></i><i class="g">8</i><i class="g">6.2</i><i class="g">6.2</i><i class="g">6.2</i><i class="g">6</i><i class="g">6</i><i class="g">6</i><i class="p">5</i><i class="p">5</i><i class="p">5</i><i class="p">5</i><i class="p">5</i><i class="p">5</i><i class="p">4.5</i><i class="p">5.0</i><i class="p">5.5</i><i class="p">5.5</i><i class="p">5.5</i><i class="g">6.6</i><i class="g">6.5</i><i class="g">7</i><i class="g">7</i><i class="g">7</i><i class="g">7</i><i class="g">6.3</i><i class="g">6.3</i><i class="g">7</i><i class="g">7</i><i class="g">7</i><i class="g">6</i><i></i></div>
<div class="r y"><i>1</i><i>1</i><i>1</i><i>1</i><i>1</i><i>1</i><i>1</i><i>1</i><i>1</i><i>1</i><i>1</i><i>1</i><i>1</i><i>1</i><i>1</i><i>1</i><i>1</i><i>1</i><i>1</i><i>1</i><i>1</i><i>1</i><i>1</i><i>1</i><i>1</i><i>1</i><i>1</i><i>1</i><i>1</i><i>1</i><i>1</i><i>1</i><i>1</i><i>1</i><i>1</i><i>1</i><i>1</i><i>1</i><i>1</i><i>1</i><i>1</i><i>1</i><i>1</i><i>1</i><i>1</i><i>1</i><i>1</i><i>1</i><i>1</i><i>1</i><i>1</i><i>1</i><i>1</i><i>1</i><i>1</i><i>1</i><i>1</i><i>1</i><i>1</i></div>
<div class="r g"><i></i><i></i><i></i><i></i><i></i><i></i><i></i><i></i><i></i><i></i><i></i><i></i><i></i><i></i><i></i><i></i><i></i><i></i><i></i><i></i><i class="p"></i><i></i><i></i><i></i><i></i><i></i><i></i><i></i><i></i><i></i><i></i><i></i><i></i><i></i><i></i><i class="b"></i><i class="b"></i><i></i><i></i><i></i><i></i><i></i><i></i><i></i><i></i><i></i><i></i><i></i><i></i><i></i><i></i><i></i><i></i><i></i><i></i><i></i><i></i><i></i><i class="w"></i></div>
</div></div>

<!-- chat -->
<div class="a" style="left:1056px;top:542px;width:16px;height:16px;border-radius:50%;background:rgba(255,255,255,.75);color:#7c8791;font-size:9px;line-height:16px;text-align:center">×</div>
<div class="a" style="left:1077px;top:532px;width:120px;height:26.500px;background:#fff;border-radius:9px"></div>
<div class="a" style="left:1082px;top:537px;width:108px;font-size:4.850px;line-height:8.300px;color:#3c4854;white-space:normal">お問い合わせありがとうございます。ヘルプが必要ですか?</div>
<div class="a" style="left:1170px;top:565px;width:28px;height:28px;background:#45a87b"></div>
<div class="a" style="left:1177.500px;top:575.500px;width:13px;height:6px;border-radius:3px;background:#25404a"></div>
<div class="a" style="left:1186px;top:583px;width:2px;height:2px;border-radius:50%;background:#25404a"></div>

<!-- sidebar -->
<div id="side">
<svg class="a" style="left:11px;top:13px" width="9" height="9" viewBox="0 0 9 9"><path d="M9 0 3 3 0 7l3-1v3l3-4z" fill="#45b583"/></svg>
<div class="t" style="left:20.500px;top:17.500px;font-weight:700;color:#f0f3f5"><span style="font-size:7.600px;letter-spacing:.25px">SEARCH WRITE</span></div>
<div class="a" style="left:7px;top:40px;width:5px;height:5px;border-radius:50%;background:#e3e7ea"></div>
<div class="t" style="left:18px;top:42.500px;color:#eef1f3"><span style="font-size:6px">http://2.example.com</span></div>
<div class="v" style="left:86px;top:42.500px;transform:rotate(135deg)"></div>

<svg class="i" style="top:60.500px" viewBox="0 0 9 9"><path d="M1 7a3.500 3.500 0 1 1 7 0zM4.500 6 6 4"/></svg><div class="t m" style="top:65px">ダッシュボード</div><div class="v" style="top:65px"></div>
<svg class="i" style="top:76px" viewBox="0 0 9 9"><path d="M1 2h6v6H1zM3 4l1.500 2L8 1"/></svg><div class="t m" style="top:80.500px">タスクリスト</div>
<div class="a" style="left:86px;top:77px;width:9.500px;height:7px;border-radius:4px;background:#3fb386;font-size:4px;line-height:7px;text-align:center;color:#d9f5e8">17</div>
<svg class="i" style="top:91.500px" viewBox="0 0 9 9"><path d="M1 1v7h7M3 5l2-2 1 1 2-2"/></svg><div class="t m" style="top:96px">GA・GSCデータサマリー</div><div class="v" style="top:96px"></div>
<svg class="i" style="top:107px" viewBox="0 0 9 9"><path d="M1 2h5v6H1h6V5M4 5l3.500-4"/></svg><div class="t m" style="top:111.500px">AIライティング</div>
<div class="a" style="left:75px;top:107.500px;width:14px;height:7.500px;border-radius:4px;background:#e8842c;font-size:3.800px;line-height:7.500px;text-align:center;color:#fde6cf;font-weight:700">NEW</div><div class="v" style="top:111.500px"></div>

<div class="t h" style="top:134px">新規コンテンツ作成</div>
<svg class="i" style="top:145px" viewBox="0 0 9 9"><path d="M1 3 4.500 1 8 3v3L4.500 8 1 6zM1 3l3.500 2L8 3"/></svg><div class="t m" style="top:149.500px">新規キーワード発見</div><div class="v" style="top:148.500px;transform:rotate(135deg)"></div>
<div class="t c" style="top:165px">関連ワードから見つける</div><div class="v" style="top:165px"></div>
<div class="t c" style="top:180.500px">競合から見つける</div><div class="v" style="top:180.500px"></div>
<svg class="i" style="top:191.500px" viewBox="0 0 9 9"><path d="M1 2h5v6H1h6V5M4 5l3.500-4"/></svg><div class="t m" style="top:196px">コンテンツ立案</div><div class="v" style="top:196px"></div>

<div class="t h" style="top:218px">既存コンテンツ改善</div>
<svg class="i" style="top:229.500px" viewBox="0 0 9 9"><path d="M1 7l2-3 1 2 2-4 1 3 1-2"/></svg><div class="t m" style="top:234px">自社キーワード分析</div><div class="v" style="top:234px"></div>
<div class="a" style="left:0;top:241.500px;width:102px;height:16px;background:#4c5965"></div>
<svg class="i" style="top:245px" viewBox="0 0 9 9"><path d="M1 5 5 1h3v3L4 8z"/></svg><div class="t m" style="top:249.500px;color:#f0f3f5">成果チェック</div><div class="v" style="top:249.500px"></div>
<svg class="i" style="top:260.500px" viewBox="0 0 9 9"><path d="M1 2h5v6H1h6V5M4 5l3.500-4"/></svg><div class="t m" style="top:265px">AIリライト提案</div>
<div class="a" style="left:75px;top:261.500px;width:14px;height:7.500px;border-radius:4px;background:#4cc284;font-size:3.800px;line-height:7.500px;text-align:center;color:#dcf7e9;font-weight:700">Beta</div><div class="v" style="top:265px"></div>

<div class="t h" style="top:287px">その他の機能</div>
<svg class="i" style="top:298.500px" viewBox="0 0 9 9"><path d="M1.500 8V1.500h6v4h-6"/></svg><div class="t m" style="top:303px">CVR支援（オプション）</div><div class="v" style="top:303px"></div>
<svg class="i" style="top:314.500px" viewBox="0 0 9 9"><circle cx="4.500" cy="3.500" r="2.500"/><path d="M3.500 7h2M4 8.300h1"/></svg><div class="t m" style="top:319px">自動提案改善リスト</div><div class="v" style="top:319px"></div>
<svg class="i" style="top:330px" viewBox="0 0 9 9"><path d="M1 2h7v5H1zM4.500 3.500v2"/></svg><div class="t m" style="top:334.500px">SEO課題チェック</div><div class="v" style="top:334.500px"></div>
<svg class="i" style="top:345.500px" viewBox="0 0 9 9"><circle cx="5" cy="4" r="2.800"/><path d="M3 6 1 8"/></svg><div class="t m" style="top:350px">検索ボリューム調査</div><div class="v" style="top:350px"></div>
<div class="a" style="left:6px;top:367px;width:88px;height:.6px;background:#47535e"></div>
<div class="a" style="left:6.500px;top:375.500px;width:87px;height:13px;border-radius:7px;background:#eceff2;color:#4a5661;font-size:5.200px;line-height:13px;text-align:center">⤓ レポートダウンロード</div>
<svg class="i" style="left:5px;top:396.500px" viewBox="0 0 9 9"><path d="M2.500 6.500V3.500a2 2 0 0 1 4 0v3zM4 8h1"/></svg><div class="t" style="left:19px;top:401px">お知らせ</div>
<div class="t" style="left:8px;top:417px;font-weight:700;color:#cfd5da"><span style="font-size:7px">?</span></div><div class="t" style="left:19px;top:417px">よくあるご質問・機能説明</div>
<svg class="i" style="left:5px;top:428.500px" viewBox="0 0 9 9"><path d="M1 2h7v5.500H1zM1 2l3.500 3L8 2"/></svg><div class="t" style="left:19px;top:433px">不具合などのお問い合わせ</div>
</div>
</body></html>
